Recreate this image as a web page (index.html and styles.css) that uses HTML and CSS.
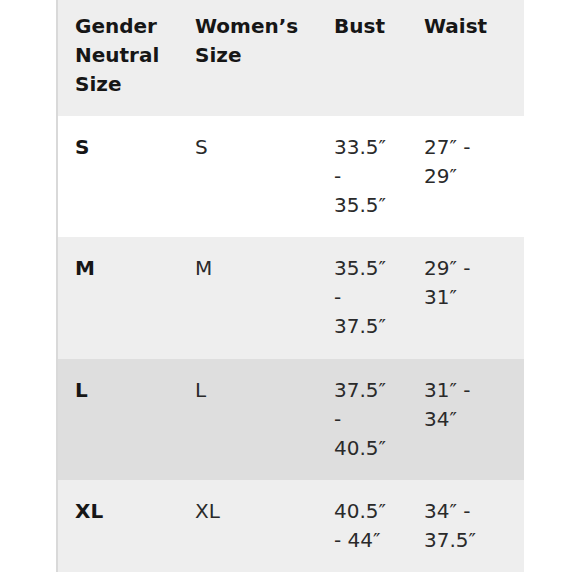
FILE: index.html
```html
<!DOCTYPE html>
<html lang="en">
<head>
<meta charset="utf-8">
<title>Size chart</title>
<link rel="stylesheet" href="styles.css">
</head>
<body>
<div class="page">
  <div class="chart">
    <table class="sizes">
      <colgroup>
        <col class="c1"><col class="c2"><col class="c3"><col class="c4">
      </colgroup>
      <thead>
        <tr class="head">
          <th>Gender<br>Neutral<br>Size</th>
          <th>Women’s<br>Size</th>
          <th>Bust</th>
          <th>Waist</th>
        </tr>
      </thead>
      <tbody>
        <tr class="row-white">
          <td class="size">S</td>
          <td>S</td>
          <td>33.5″<br>-<br>35.5″</td>
          <td>27″ -<br>29″</td>
        </tr>
        <tr class="row-light row-tall">
          <td class="size">M</td>
          <td>M</td>
          <td>35.5″<br>-<br>37.5″</td>
          <td>29″ -<br>31″</td>
        </tr>
        <tr class="row-dark">
          <td class="size">L</td>
          <td>L</td>
          <td>37.5″<br>-<br>40.5″</td>
          <td>31″ -<br>34″</td>
        </tr>
        <tr class="row-light">
          <td class="size">XL</td>
          <td>XL</td>
          <td>40.5″<br>- 44″</td>
          <td>34″ -<br>37.5″</td>
        </tr>
      </tbody>
    </table>
  </div>
</div>
</body>
</html>
```

FILE: styles.css
```css
html, body {
  margin: 0;
  padding: 0;
  background: #ffffff;
}

.page {
  padding-left: 56px;
  font-family: "DejaVu Sans", "Liberation Sans", sans-serif;
  font-size: 20px;
  line-height: 29px;
  color: #2a2a2a;
}

.chart {
  width: 466px;
  overflow: hidden;
  border-left: 2px solid #d9d9d9;
}

.sizes {
  border-collapse: collapse;
  table-layout: fixed;
  width: 466px;
}

.c1 { width: 120px; }
.c2 { width: 139px; }
.c3 { width: 90px; }
.c4 { width: 117px; }

.sizes th,
.sizes td {
  text-align: left;
  vertical-align: top;
  padding: 17px 0 17px 17px;
  white-space: nowrap;
}

.sizes th {
  font-weight: 700;
  color: #161616;
  padding-top: 12px;
  padding-bottom: 17px;
}

.row-tall td {
  padding-bottom: 18px;
}

.head { background: #eeeeee; }
.row-white { background: #ffffff; }
.row-light { background: #eeeeee; }
.row-dark { background: #dedede; }

.size {
  font-weight: 700;
  color: #161616;
}
```
